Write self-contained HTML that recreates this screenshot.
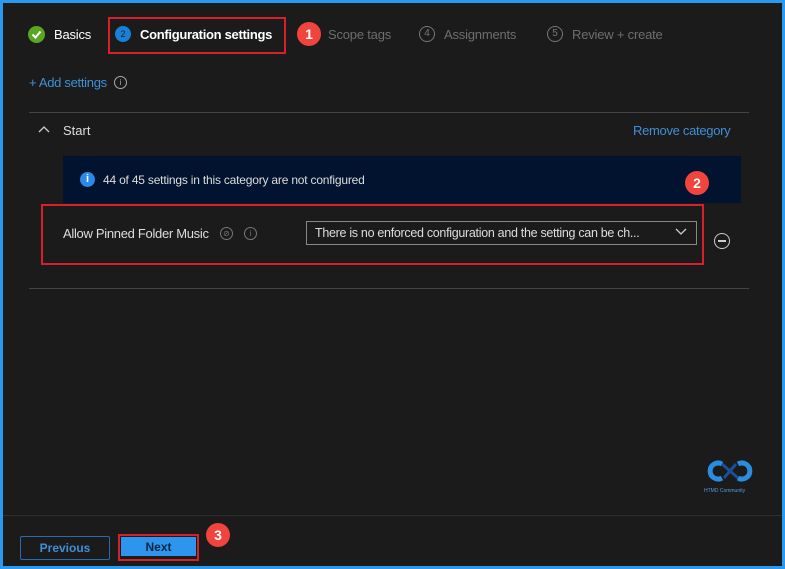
<!DOCTYPE html><html><head><style>
body{margin:0;width:785px;height:569px;overflow:hidden;background:#1b1b1b;font-family:"Liberation Sans",sans-serif;position:relative}
.a{position:absolute}
.frame{left:0;top:0;width:779px;height:563px;border:3px solid #2a9af0}
.t{font-size:13px;color:#fff;white-space:nowrap}
.g{color:#6e6e6e}
.badge{width:24px;height:24px;border-radius:50%;background:#f0443c;color:#fff;font-size:14px;font-weight:bold;text-align:center;line-height:24px}
.circ{width:14px;height:14px;border:1px solid #777;border-radius:50%;color:#777;font-size:10px;text-align:center;line-height:14px}
</style></head><body>
<div class="a frame"></div>
<div class="a" style="left:28px;top:26px;width:17px;height:17px;border-radius:50%;background:#5aa522"></div>
<svg class="a" style="left:28px;top:26px" width="17" height="17"><path d="M4.5 8.5l3 3 5-6" stroke="#fff" stroke-width="2" fill="none"/></svg>
<div class="a t" style="left:54px;top:27px;letter-spacing:-0.2px">Basics</div>
<div class="a" style="left:108px;top:17px;width:174px;height:33px;border:2px solid #d8202a"></div>
<div class="a" style="left:115px;top:26px;width:16px;height:16px;border-radius:50%;background:#1a7fd6;color:#10243a;font-size:9px;text-align:center;line-height:16px">2</div>
<div class="a t" style="left:140px;top:27px;font-weight:bold;letter-spacing:-0.3px">Configuration settings</div>
<div class="a badge" style="left:297px;top:22px">1</div>
<div class="a t g" style="left:328px;top:27px;letter-spacing:-0.2px">Scope tags</div>
<div class="a circ" style="left:419px;top:26px">4</div>
<div class="a t g" style="left:444px;top:27px;letter-spacing:-0.2px">Assignments</div>
<div class="a circ" style="left:547px;top:26px">5</div>
<div class="a t g" style="left:572px;top:27px;letter-spacing:-0.2px">Review + create</div>
<div class="a t" style="left:29px;top:75px;color:#3f8fd8;font-size:13px;letter-spacing:-0.3px">+ Add settings</div>
<div class="a circ" style="left:114px;top:76px;width:11px;height:11px;line-height:11px;font-size:8px;border-color:#aaa;color:#aaa">i</div>
<div class="a" style="left:29px;top:112px;width:720px;height:1px;background:#444"></div>
<svg class="a" style="left:38px;top:125px" width="12" height="10"><path d="M1 7l5-5 5 5" stroke="#ccc" stroke-width="1.3" fill="none"/></svg>
<div class="a t" style="left:63px;top:123px;font-size:13px;color:#ddd">Start</div>
<div class="a t" style="left:633px;top:123px;color:#3f8fd8;letter-spacing:-0.3px">Remove category</div>
<div class="a" style="left:63px;top:156px;width:678px;height:47px;background:#01132e"></div>
<div class="a" style="left:80px;top:172px;width:15px;height:15px;border-radius:50%;background:#2b8ae8;color:#fff;font-size:11px;font-weight:bold;text-align:center;line-height:15px">i</div>
<div class="a t" style="left:103px;top:173px;font-size:12px;color:#ddd;letter-spacing:-0.2px">44 of 45 settings in this category are not configured</div>
<div class="a badge" style="left:685px;top:171px">2</div>
<div class="a" style="left:41px;top:204px;width:659px;height:57px;border:2px solid #d8202a"></div>
<div class="a t" style="left:63px;top:226px;font-size:13px;color:#ddd;letter-spacing:-0.3px">Allow Pinned Folder Music</div>
<div class="a circ" style="left:220px;top:227px;width:11px;height:11px;line-height:11px;font-size:8px">⊘</div>
<div class="a circ" style="left:244px;top:227px;width:11px;height:11px;line-height:11px;font-size:8px">i</div>
<div class="a" style="left:306px;top:221px;width:389px;height:22px;border:1px solid #888"></div>
<div class="a t" style="left:315px;top:226px;font-size:12.5px;color:#ddd;letter-spacing:-0.3px">There is no enforced configuration and the setting can be ch...</div>
<svg class="a" style="left:675px;top:228px" width="12" height="8"><path d="M1 1l5 5 5-5" stroke="#ccc" stroke-width="1.3" fill="none"/></svg>
<div class="a" style="left:714px;top:233px;width:14px;height:14px;border:1.5px solid #ccc;border-radius:50%"></div>
<div class="a" style="left:718px;top:240px;width:8px;height:1.5px;background:#ccc"></div>
<div class="a" style="left:29px;top:288px;width:720px;height:1px;background:#444"></div>
<svg class="a" style="left:704px;top:456px" width="52" height="30"><path d="M18 8a8 8 0 1 0 0 14" stroke="#2a8ee0" stroke-width="5" fill="none"/><path d="M34 8a8 8 0 1 1 0 14" stroke="#2a8ee0" stroke-width="5" fill="none"/><path d="M18 8l16 14M20 22l12-14" stroke="#1a4f9a" stroke-width="3"/></svg>
<div class="a" style="left:704px;top:488px;font-size:5px;color:#5a9ad8">HTMD Community</div>
<div class="a" style="left:3px;top:515px;width:779px;height:1px;background:#2e2e2e"></div>
<div class="a" style="left:20px;top:536px;width:88px;height:22px;border:1px solid #2a6aa8;color:#3f8fd8;font-size:12px;font-weight:bold;text-align:center;line-height:22px;border-radius:2px">Previous</div>
<div class="a" style="left:118px;top:534px;width:77px;height:23px;border:2px solid #d8202a"></div>
<div class="a" style="left:121px;top:537px;width:75px;height:19px;background:#2e95ee;color:#0b2540;font-size:12px;font-weight:bold;text-align:center;line-height:20px">Next</div>
<div class="a badge" style="left:206px;top:523px">3</div>
</body></html>
